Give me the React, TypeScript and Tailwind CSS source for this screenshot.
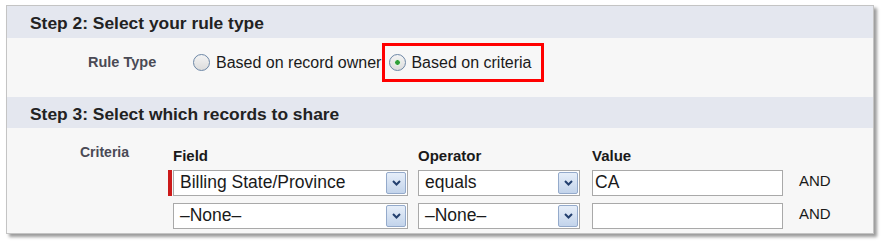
import React from 'react';

function Radio({ checked }: { checked?: boolean }) {
  return (
    <span className="flex h-[17px] w-[17px] shrink-0 items-center justify-center rounded-full border border-[#6d87a6] bg-gradient-to-b from-[#f4f4f4] to-[#dcdcdc]">
      {checked && (
        <span className="h-[7px] w-[7px] rounded-full border border-white bg-[#2f9e37]" />
      )}
    </span>
  );
}

function DropButton() {
  return (
    <span className="mr-[1px] flex h-[22px] w-[20px] shrink-0 items-center justify-center rounded-[2px] border border-[#94aacb] bg-gradient-to-b from-[#e6eef9] to-[#c3d4eb]">
      <svg width="9" height="6" viewBox="0 0 9 6">
        <path d="M1 1 L4.5 4.5 L8 1" fill="none" stroke="#23406f" strokeWidth="2" />
      </svg>
    </span>
  );
}

function Select({ value, width }: { value: string; width: string }) {
  return (
    <div className={`flex h-[26px] items-center justify-between border border-[#a9a9a9] bg-white ${width}`}>
      <span className="pl-[6px] text-[17.5px] leading-none text-[#1a1a1a]">{value}</span>
      <DropButton />
    </div>
  );
}

function CriteriaRow({ field, op, value, required }: { field: string; op: string; value: string; required?: boolean }) {
  return (
    <div className="flex h-[26px] items-start">
      <div className="flex w-[250px] items-stretch">
        <div className={`w-[4px] ${required ? 'bg-[#cc1a1a]' : ''}`} />
        <div className="ml-[1px]">
          <Select value={field} width="w-[235px]" />
        </div>
      </div>
      <div className="w-[174px]">
        <Select value={op} width="w-[162px]" />
      </div>
      <div className="w-[207px]">
        <div className="flex h-[26px] w-[191px] items-center border border-[#a9a9a9] bg-white pl-[2px] text-[17.5px] leading-none text-[#1a1a1a]">
          {value}
        </div>
      </div>
      <div className="mt-[2px] text-[15px] leading-[17px] text-[#1a1a1a]">AND</div>
    </div>
  );
}

export default function App() {
  return (
    <div className="h-[244px] w-[888px] bg-white pl-[6px] pt-[5px] font-['Liberation_Sans',Arial,sans-serif]">
      <div className="h-[229px] w-[868px] border border-[#c4c4c4] bg-[#f7f7f7] shadow-[3px_3px_3px_#9c9c9c]">
        {/* Step 2 */}
        <div className="flex h-[32px] items-center bg-[#e4e7ef] pl-[23px] pt-[3px] text-[17.4px] font-bold text-[#222]">
          Step 2: Select your rule type
        </div>
        <div className="h-[59px] pt-[5px]">
          <div className="flex h-[39px] items-center">
            <div className="w-[186px] pl-[81px] text-[14.5px] font-bold text-[#4a4a55]">Rule Type</div>
            <div className="flex items-center">
              <Radio />
              <span className="ml-[6px] text-[16px] text-[#1a1a1a]">Based on record owner</span>
            </div>
            <div className="ml-[1px] flex h-[39px] items-center border-[3px] border-[#ff0000] pl-[4px] pr-[9px]">
              <Radio checked />
              <span className="ml-[5px] text-[16px] text-[#1a1a1a]">Based on criteria</span>
            </div>
          </div>
        </div>

        {/* Step 3 */}
        <div className="flex h-[31px] items-center bg-[#e4e7ef] pl-[23px] pt-[3px] text-[17.4px] font-bold text-[#222]">
          Step 3: Select which records to share
        </div>
        <div className="flex">
          <div className="w-[161px] pl-[73px] pt-[16px] text-[14px] font-bold leading-[16px] text-[#4a4a55]">
            Criteria
          </div>
          <div className="flex flex-col">
            <div className="mt-[20px] flex h-[17px] items-center text-[15px] font-bold text-[#1a1a1a]">
              <div className="w-[250px] pl-[5px]">Field</div>
              <div className="w-[174px]">Operator</div>
              <div>Value</div>
            </div>
            <div className="mt-[5px] flex flex-col gap-[7px]">
              <CriteriaRow field="Billing State/Province" op="equals" value="CA" required />
              <CriteriaRow field="–None–" op="–None–" value="" />
            </div>
          </div>
        </div>
      </div>
    </div>
  );
}
